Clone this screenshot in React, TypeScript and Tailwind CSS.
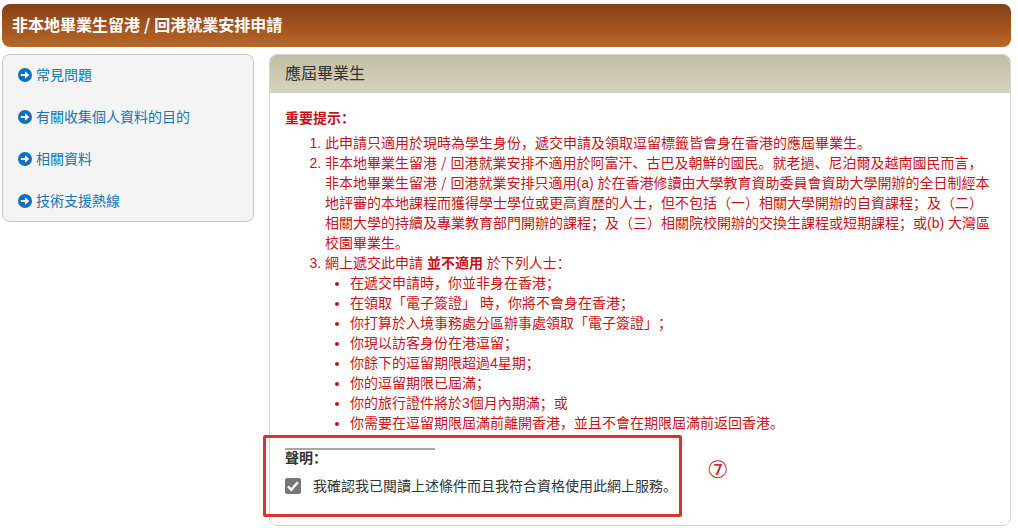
import { useState } from 'react'

const links = ['常見問題', '有關收集個人資料的目的', '相關資料', '技術支援熱線']

const exclusions = [
  '在遞交申請時，你並非身在香港；',
  '在領取「電子簽證」 時，你將不會身在香港；',
  '你打算於入境事務處分區辦事處領取「電子簽證」；',
  '你現以訪客身份在港逗留；',
  '你餘下的逗留期限超過4星期；',
  '你的逗留期限已屆滿；',
  '你的旅行證件將於3個月內期滿；或',
  '你需要在逗留期限屆滿前離開香港，並且不會在期限屆滿前返回香港。',
]

function ArrowIcon() {
  return (
    <svg viewBox="0 0 14 14" className="size-3.5 shrink-0" aria-hidden="true">
      <circle cx="7" cy="7" r="7" fill="#0f70bd" />
      <path d="M2.8 5.9H7V3.2L11.3 7L7 10.8V8.1H2.8Z" fill="#fff" />
    </svg>
  )
}

function Slash() {
  return <span className="px-1 font-['Noto_Sans_CJK_SC',sans-serif] leading-none">/</span>
}

function Sidebar() {
  return (
    <nav className="w-[252px] shrink-0 rounded-lg border border-[#c8c8c8] bg-[#f4f4f4] px-[15px] py-2.5">
      <ul className="flex flex-col gap-[22px]">
        {links.map(label => (
          <li key={label}>
            <a href="#" className="flex items-center gap-1 text-[#1277b5] hover:underline">
              <ArrowIcon />
              {label}
            </a>
          </li>
        ))}
      </ul>
    </nav>
  )
}

function Notice() {
  return (
    <div className="text-[#c4141b]">
      <p className="font-bold">重要提示：</p>
      <ol className="mt-[5px] list-decimal pl-10">
        <li>此申請只適用於現時為學生身份，遞交申請及領取逗留標籤皆會身在香港的應屆畢業生。</li>
        <li>
          非本地畢業生留港<Slash />回港就業安排不適用於阿富汗、古巴及朝鮮的國民。就老撾、尼泊爾及越南國民而言，非本地畢業生留港<Slash />回港就業安排只適用(a)
          {' '}於在香港修讀由大學教育資助委員會資助大學開辦的全日制經本地評審的本地課程而獲得學士學位或更高資歷的人士，但不包括（一）相關大學開辦的自資課程；及（二）相關大學的持續及專業教育部門開辦的課程；及（三）相關院校開辦的交換生課程或短期課程；或(b)
          {' '}大灣區校園畢業生。
        </li>
        <li>
          網上遞交此申請 <strong>並不適用</strong> 於下列人士：
          <ul className="list-disc pl-[25px]">
            {exclusions.map(text => (
              <li key={text}>{text}</li>
            ))}
          </ul>
        </li>
      </ol>
    </div>
  )
}

function Declaration() {
  const [agreed, setAgreed] = useState(true)
  return (
    <section className="relative mt-[15px] text-[#333]">
      <hr className="w-[150px] border-t-2 border-[#a6a6a6]" />
      <h3 className="leading-4 font-bold">聲明：</h3>
      <label className="mt-2.5 flex items-center gap-3">
        <span className="relative flex size-4 shrink-0">
          <input
            type="checkbox"
            checked={agreed}
            onChange={e => setAgreed(e.target.checked)}
            className="peer size-4 appearance-none rounded-xs border border-[#767676] bg-white checked:bg-[#767676]"
          />
          <svg viewBox="0 0 16 16" className="pointer-events-none absolute inset-0 hidden peer-checked:block" aria-hidden="true">
            <path d="M3 8.5L6.3 11.7L12.8 4.2" fill="none" stroke="#fff" strokeWidth="2.4" />
          </svg>
        </span>
        我確認我已閱讀上述條件而且我符合資格使用此網上服務。
      </label>
      <div className="pointer-events-none absolute -top-[13px] -left-[22px] h-[82px] w-[419px] rounded-xs border-3 border-[#d9332c]" />
      <span className="absolute top-2 left-[422px] font-['DejaVu_Sans',sans-serif] text-2xl leading-7 text-[#c5352f]">⑦</span>
    </section>
  )
}

export default function App() {
  return (
    <div className="bg-white pt-1 pr-[7px] pb-0.5 pl-0.5 font-['Liberation_Sans','Noto_Sans_CJK_SC',sans-serif] text-sm leading-5 [text-spacing-trim:space-all]">
      <header className="flex h-[43px] items-center rounded-lg bg-linear-to-b from-[#873f17] to-[#b96828] px-2.5">
        <h1 className="text-base leading-5 font-bold text-white">
          非本地畢業生留港<Slash />回港就業安排申請
        </h1>
      </header>
      <div className="mt-[7px] flex items-start gap-[15px]">
        <Sidebar />
        <main className="min-w-0 flex-1 rounded-lg border border-[#d5d5d5]">
          <h2 className="flex h-[38px] items-center rounded-t-[7px] bg-linear-to-b from-[#c3bda3] to-[#d8d3c0] px-[15px] text-base text-[#333]">
            應屆畢業生
          </h2>
          <div className="px-[15px] pt-[15px] pb-[29px]">
            <Notice />
            <Declaration />
          </div>
        </main>
      </div>
    </div>
  )
}
